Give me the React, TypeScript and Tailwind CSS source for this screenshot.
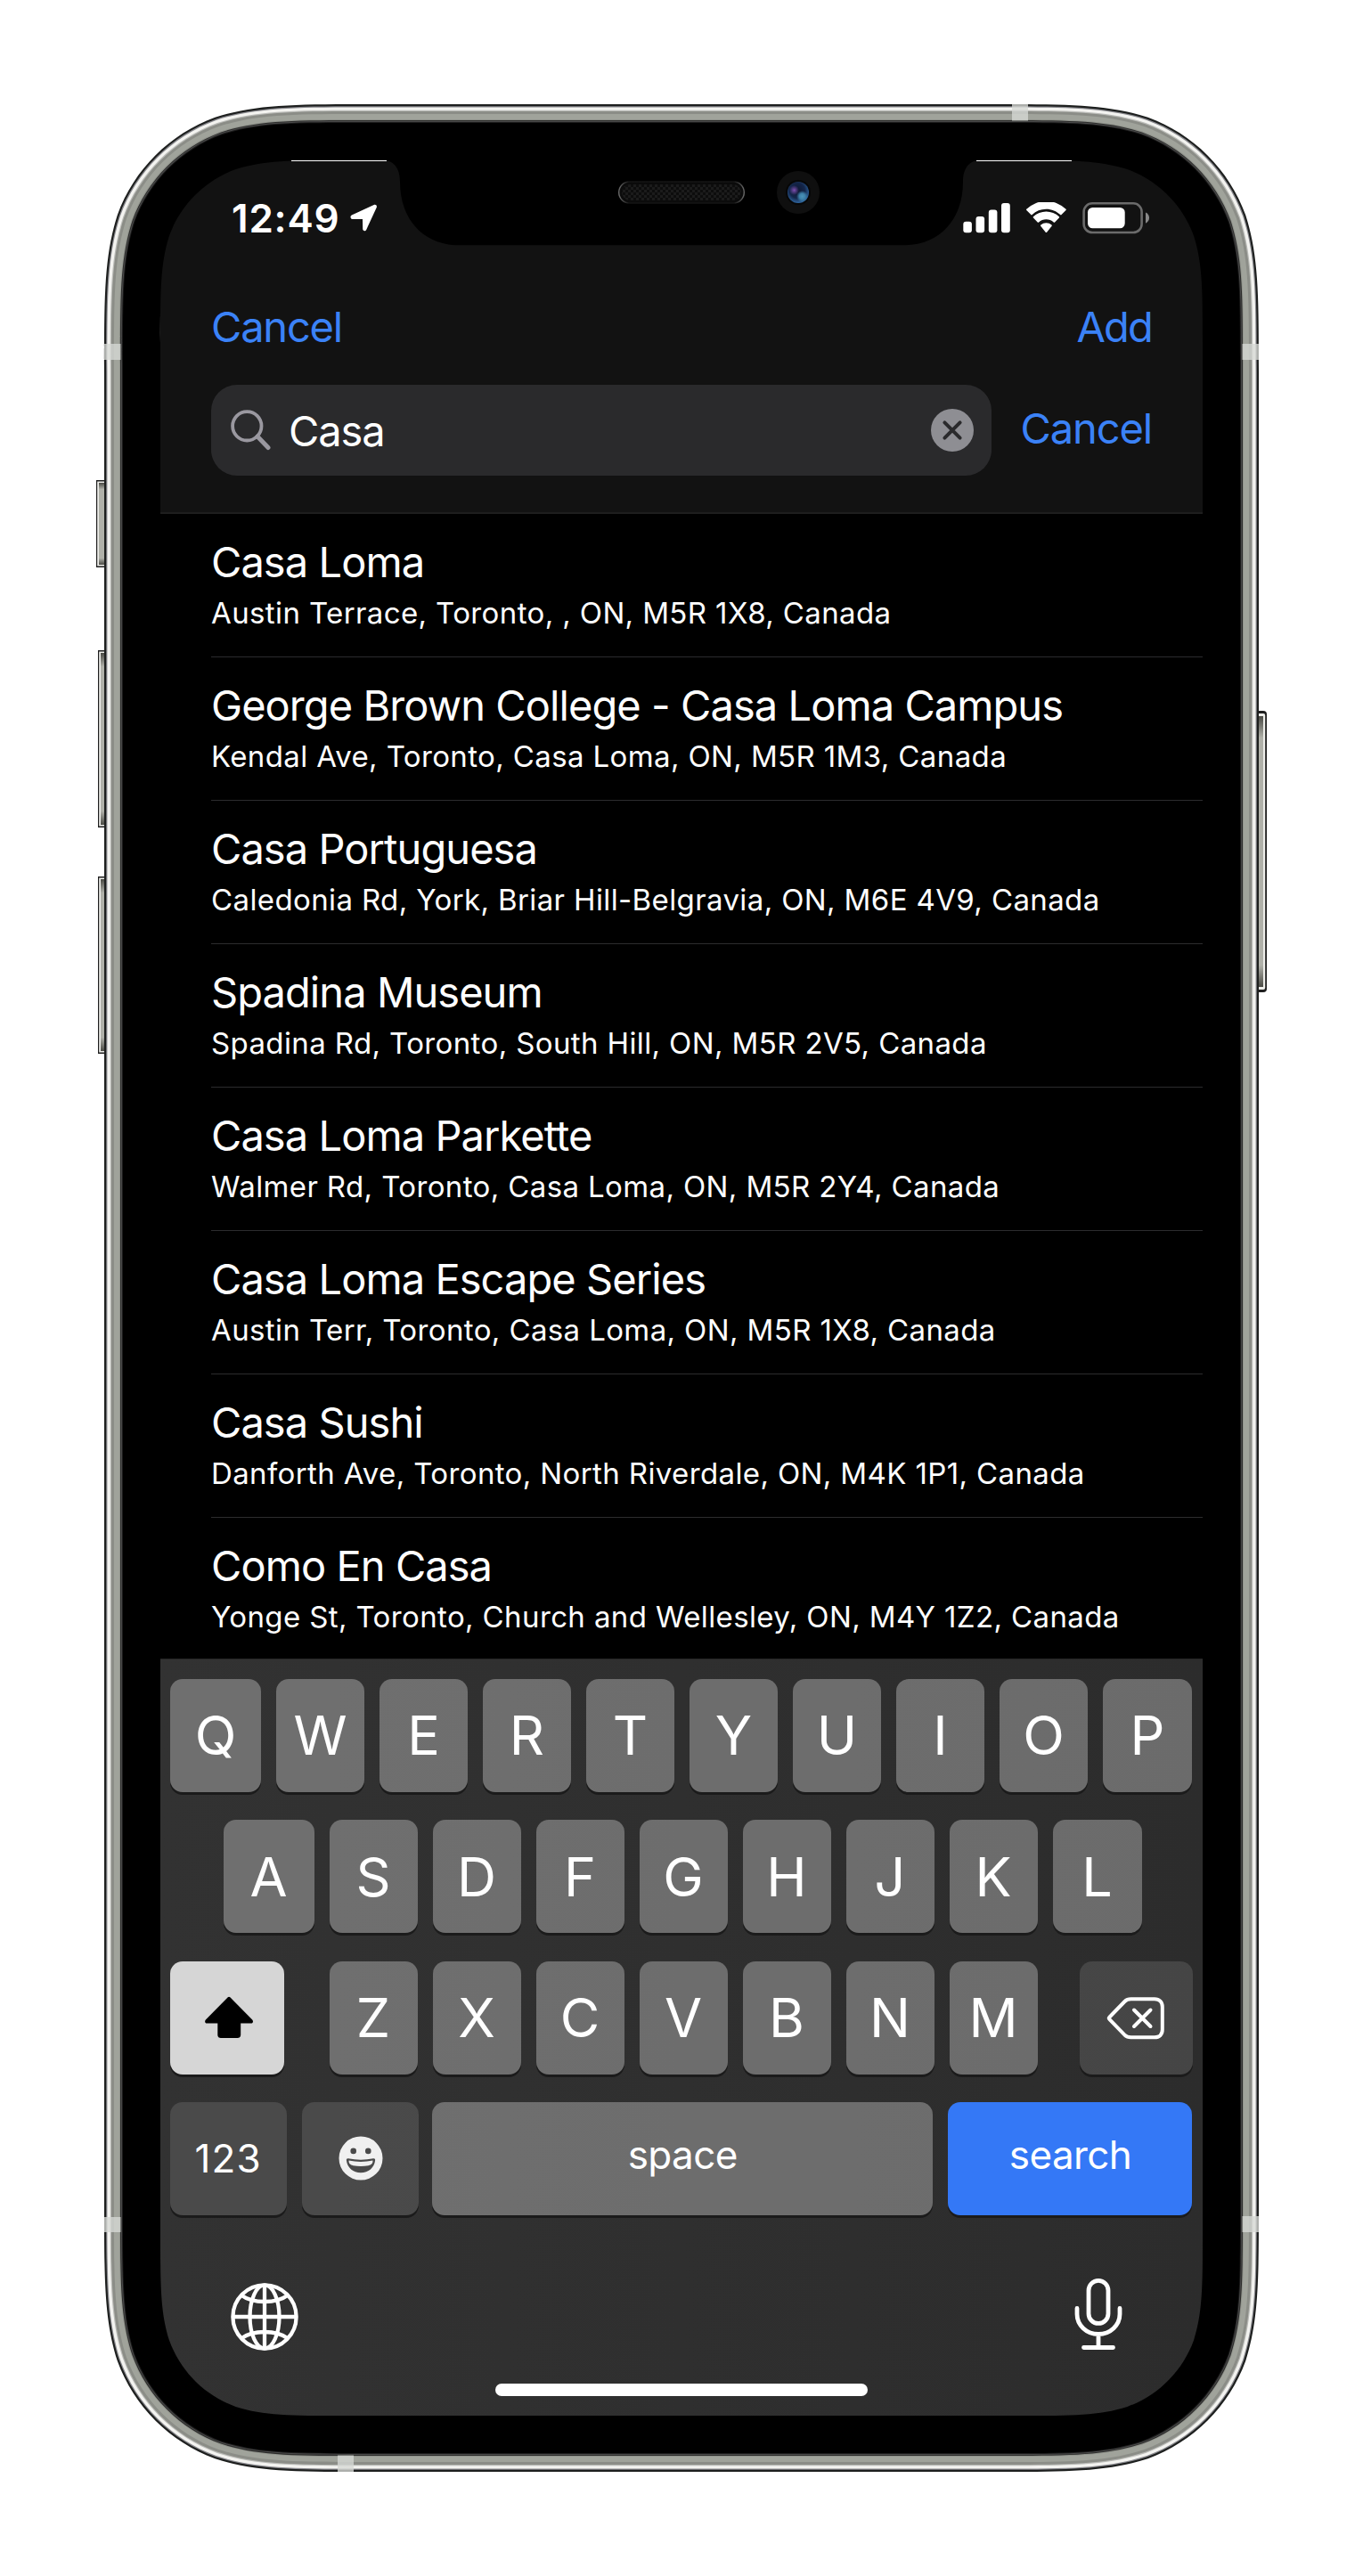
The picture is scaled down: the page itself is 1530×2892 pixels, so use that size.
import type { ReactNode } from "react";

const results = [
  ["Casa Loma", "Austin Terrace, Toronto, , ON, M5R 1X8, Canada"],
  ["George Brown College - Casa Loma Campus", "Kendal Ave, Toronto, Casa Loma, ON, M5R 1M3, Canada"],
  ["Casa Portuguesa", "Caledonia Rd, York, Briar Hill-Belgravia, ON, M6E 4V9, Canada"],
  ["Spadina Museum", "Spadina Rd, Toronto, South Hill, ON, M5R 2V5, Canada"],
  ["Casa Loma Parkette", "Walmer Rd, Toronto, Casa Loma, ON, M5R 2Y4, Canada"],
  ["Casa Loma Escape Series", "Austin Terr, Toronto, Casa Loma, ON, M5R 1X8, Canada"],
  ["Casa Sushi", "Danforth Ave, Toronto, North Riverdale, ON, M4K 1P1, Canada"],
  ["Como En Casa", "Yonge St, Toronto, Church and Wellesley, ON, M4Y 1Z2, Canada"],
];

/** Rounded rectangle with continuous-curvature corners. */
function squircle(inset: number, radius: number, box = { x: 117, y: 117, w: 1296, h: 2658 }) {
  const l = box.x + inset;
  const t = box.y + inset;
  const r = box.x + box.w - inset;
  const b = box.y + box.h - inset;
  const k = radius;
  const A = 1.52866483 * k;
  const B = 1.08849323 * k;
  const C = 0.86840689 * k;
  const D = 0.63149399 * k;
  const E = 0.07491139 * k;
  const F = 0.37282392 * k;
  const G = 0.16905899 * k;
  return [
    `M${l + A} ${t}L${r - A} ${t}`,
    `C${r - B} ${t} ${r - C} ${t} ${r - D} ${t + E}`,
    `C${r - F} ${t + G} ${r - G} ${t + F} ${r - E} ${t + D}`,
    `C${r} ${t + C} ${r} ${t + B} ${r} ${t + A}`,
    `L${r} ${b - A}`,
    `C${r} ${b - B} ${r} ${b - C} ${r - E} ${b - D}`,
    `C${r - G} ${b - F} ${r - F} ${b - G} ${r - D} ${b - E}`,
    `C${r - C} ${b} ${r - B} ${b} ${r - A} ${b}`,
    `L${l + A} ${b}`,
    `C${l + B} ${b} ${l + C} ${b} ${l + D} ${b - E}`,
    `C${l + F} ${b - G} ${l + G} ${b - F} ${l + E} ${b - D}`,
    `C${l} ${b - C} ${l} ${b - B} ${l} ${b - A}`,
    `L${l} ${t + A}`,
    `C${l} ${t + B} ${l} ${t + C} ${l + E} ${t + D}`,
    `C${l + G} ${t + F} ${l + F} ${t + G} ${l + D} ${t + E}`,
    `C${l + C} ${t} ${l + B} ${t} ${l + A} ${t}Z`,
  ].join("");
}

const screenHole = squircle(0, 134, { x: 180, y: 180, w: 1170, h: 2532 });
const ringHole = squircle(0, 150, { x: 160, y: 160, w: 1210, h: 2572 });

const rings: [number, string][] = [
  [0, "#1d1f1e"],
  [2.2, "#86868b"],
  [3.4, "#f3f3f0"],
  [6.8, "#b9bab6"],
  [8, "#8b8d87"],
  [11, "#a0a39b"],
  [17, "#8f928b"],
  [18, "#2b2b2a"],
  [19, "#4b4b4b"],
  [20, "#1b1b1b"],
  [21, "#000000"],
];

const leftButtons = [
  [108, 539, 9, 98],
  [110, 730, 7, 199],
  [110, 984, 7, 199],
];

function DeviceFrame() {
  return (
    <svg className="pointer-events-none absolute inset-0" width="1530" height="2892" viewBox="0 0 1530 2892" fill="none">
      <defs>
        <linearGradient id="btnV" x1="0" y1="0" x2="0" y2="1">
          <stop offset="0" stopColor="#4a4a44" />
          <stop offset="0.08" stopColor="#b0b1a9" />
          <stop offset="0.92" stopColor="#b0b1a9" />
          <stop offset="1" stopColor="#4a4a44" />
        </linearGradient>
        <pattern id="mesh" width="6" height="6" patternUnits="userSpaceOnUse">
          <rect width="6" height="6" fill="#0d0d0d" />
          <rect width="3" height="3" fill="#1b1b1b" />
          <rect x="3" y="3" width="3" height="3" fill="#1b1b1b" />
        </pattern>
        <linearGradient id="rim" x1="0" y1="0" x2="1" y2="0">
          <stop offset="0" stopColor="#6a6a6a" />
          <stop offset="0.08" stopColor="#141414" />
          <stop offset="0.92" stopColor="#141414" />
          <stop offset="1" stopColor="#6a6a6a" />
        </linearGradient>
        <radialGradient id="lens" cx="0.45" cy="0.4" r="0.6">
          <stop offset="0" stopColor="#0e1630" />
          <stop offset="0.6" stopColor="#14264a" />
          <stop offset="1" stopColor="#2f66a0" />
        </radialGradient>
        <radialGradient id="violet">
          <stop offset="0" stopColor="#7d4fb0" />
          <stop offset="1" stopColor="#7d4fb0" stopOpacity="0" />
        </radialGradient>
        <radialGradient id="cyan">
          <stop offset="0" stopColor="#4a93b8" />
          <stop offset="0.5" stopColor="#3d80a8" />
          <stop offset="1" stopColor="#3d80a8" stopOpacity="0" />
        </radialGradient>
      </defs>

      {leftButtons.map(([x, y, w, h]) => (
        <g key={y}>
          <path d={`M${x + w + 1} ${y}H${x}V${y + h}H${x + w + 1}Z`} fill="#1f1f1f" />
          <path d={`M${x + w} ${y + 1.5}H${x + 1.2}V${y + h - 1.5}H${x + w}Z`} fill="#eeeeea" />
          <path d={`M${x + w} ${y + 3}H${x + 3}V${y + h - 3}H${x + w}Z`} fill="url(#btnV)" />
        </g>
      ))}
      <rect x="1405" y="798" width="17" height="316" rx="4" fill="#1f1f1f" />
      <rect x="1405" y="801" width="15.2" height="310" rx="2" fill="#eeeeea" />
      <rect x="1405" y="804" width="13" height="304" fill="url(#btnV)" />

      {rings.map(([inset, color], i) => (
        <path
          key={inset}
          fillRule="evenodd"
          d={squircle(inset, 197 - inset) + (i === rings.length - 1 ? screenHole : ringHole)}
          fill={color}
        />
      ))}

      <g fill="#d6d8d5" fillOpacity="0.78">
        <rect x="117" y="386" width="18.5" height="18" />
        <rect x="1394.5" y="386" width="18.5" height="18" />
        <rect x="117" y="2489" width="18.5" height="17" />
        <rect x="1394.5" y="2488" width="18.5" height="18" />
        <rect x="1136" y="117" width="18" height="18.5" />
        <rect x="379" y="2756.5" width="18" height="18.5" />
      </g>

      <path
        d="M430 179V180C443 180 449 190 449 204C449 247 476 275.3 515 275.3H1015C1054 275.3 1081 247 1081 204C1081 190 1087 180 1100 180V179Z"
        fill="#000"
      />
      <path d="M327 180.5H434M1096 180.5H1203" stroke="#fff" />

      <rect x="694.7" y="204" width="140.6" height="24" rx="12" fill="#0b0b0b" stroke="url(#rim)" strokeWidth="1.4" />
      <rect x="698" y="207" width="134" height="18" rx="9" fill="url(#mesh)" />
      <circle cx="896" cy="216" r="24" fill="#0f0f0f" />
      <circle cx="896" cy="216" r="14" fill="#070707" />
      <circle cx="896" cy="216" r="12" fill="url(#lens)" />
      <circle cx="891.5" cy="213.5" r="5.5" fill="url(#violet)" />
      <circle cx="900.5" cy="220.5" r="6.5" fill="url(#cyan)" />
    </svg>
  );
}

function StatusIcons() {
  return (
    <svg width="210" height="36" viewBox="1081 227 210 36" fill="none">
      <g fill="#fff">
        <rect x="1081.3" y="248.8" width="9.6" height="12.4" rx="3" />
        <rect x="1095.5" y="243" width="9.6" height="18.2" rx="3" />
        <rect x="1109.8" y="235.6" width="9.6" height="25.6" rx="3" />
        <rect x="1124" y="228" width="9.8" height="33.2" rx="3" />
        <path d="M1174.4 234.8c6 0 11.6 2.3 15.8 6.3c.4.4 1 .4 1.3 0l5-5c.4-.4.4-1 0-1.4a32 32 0 0 0-44.2 0c-.4.4-.4 1 0 1.4l5 5c.4.4 1 .4 1.3 0a22.7 22.7 0 0 1 15.8-6.3z" />
        <path d="M1174.4 246.2c3.1 0 6 1.2 8.3 3.2c.4.4 1 .4 1.4 0l4.8-4.8c.4-.4.4-1 0-1.4a21 21 0 0 0-29 0c-.4.4-.4 1 0 1.4l4.8 4.8c.4.4 1 .4 1.4 0a12.4 12.4 0 0 1 8.3-3.2z" />
        <path d="M1180.500 253.900c.4-.4.4-1 0-1.400a9.500 9.500 0 0 0-12.200 0c-.4.4-.4 1 0 1.400l5.400 6.800c.4.500 1 .5 1.400 0z" />
        <rect x="1221" y="233" width="41.7" height="23.3" rx="5.5" />
        <path d="M1286 238.5c2.6 1.2 4 3.4 4 6.1s-1.4 4.9-4 6.1z" fillOpacity="0.5" />
      </g>
      <rect x="1216.6" y="228.3" width="65" height="32.7" rx="9.5" stroke="#6b6b6b" strokeWidth="2.6" />
    </svg>
  );
}

function Key({ children, className }: { children: ReactNode; className: string }) {
  return (
    <div className={`flex h-[127px] items-center justify-center rounded-[14px] text-white shadow-[0_3px_0_#1b1b1b] ${className}`}>
      {children}
    </div>
  );
}

function Letters({ row, wideEdges }: { row: string; wideEdges: boolean }) {
  return (
    <div className="flex gap-[17px] text-[61px]">
      {row.split("").map((c, i) => (
        <Key
          key={c}
          className={
            wideEdges && i === 0
              ? "w-[102px] bg-white/30 pt-px"
              : wideEdges && i === row.length - 1
                ? "w-[100px] bg-white/30 pt-px"
                : "w-[99px] bg-white/30 pt-px"
          }
        >
          {c}
        </Key>
      ))}
    </div>
  );
}

function Header() {
  return (
    <header className="h-[397px] border-b-2 border-[#1e1e1e] bg-[#121212] pt-[39px]">
      <div className="flex h-[52px] items-center justify-between pr-[59px] pl-[80px]">
        <div className="flex items-center gap-[11px]">
          <span className="text-[44px] leading-[52px] font-semibold tracking-[0.8px] text-white">12:49</span>
          <svg className="-mt-[2px]" width="31" height="31" viewBox="0 0 31 31">
            <path
              d="M1.8 12.6L26.7 1c2-.9 3.9.9 3 3L18.2 28.9c-.9 2-4 1.6-4-.9L14 17H2.9C.3 17-.4 13.7 1.8 12.6Z"
              fill="#fff"
            />
          </svg>
        </div>
        <StatusIcons />
      </div>
      <nav className="mt-[68px] flex justify-between px-[57px] text-[47px] leading-[56px] text-[#3b82f7]">
        <span className="tracking-[-1.2px]">Cancel</span>
        <span className="tracking-[-1.8px]">Add</span>
      </nav>
      <div className="mt-[37px] flex h-[102px] items-center justify-between px-[57px]">
        <div className="flex h-full w-[876px] items-center rounded-[29px] bg-[#2a2a2c] pr-[20px] pl-[22px]">
          <svg width="46" height="46" viewBox="0 0 46 46" fill="none" stroke="#9a98a0">
            <circle cx="18.3" cy="18.3" r="16.2" strokeWidth="3.8" />
            <path d="M30 30L42 42.5" strokeWidth="5" strokeLinecap="round" />
          </svg>
          <span className="flex-1 pt-[2px] pl-[19px] text-[47px] leading-[56px] tracking-[-1.1px] text-white">Casa</span>
          <svg width="48" height="48" viewBox="0 0 48 48" fill="none">
            <circle cx="24" cy="24" r="24" fill="#8e8e93" />
            <path d="M15.4 15.4L32.6 32.6M32.6 15.4L15.4 32.6" stroke="#2a2a2c" strokeWidth="4" strokeLinecap="round" />
          </svg>
        </div>
        <span className="pb-1 text-[47px] leading-[56px] tracking-[-1.1px] text-[#3b82f7]">Cancel</span>
      </div>
    </header>
  );
}

function Keyboard() {
  return (
    <section className="flex h-[850px] flex-col border-t border-[#262626] bg-linear-to-r from-[#323232] to-[#2c2c2c] pt-[22px]">
      <div className="flex flex-col gap-[31.3px]">
        <div className="pl-[11px]">
          <Letters row="QWERTYUIOP" wideEdges />
        </div>
        <div className="pl-[70.5px]">
          <Letters row="ASDFGHJKL" wideEdges />
        </div>
        <div className="flex pl-[11px]">
          <Key className="mr-[51px] w-[127.5px] bg-[#d6d6d6]">
            <svg className="ml-1" width="54" height="48" viewBox="0 0 54 48">
              <path
                d="M25.8 1.3c.8-.8 1.7-.8 2.5 0L53.2 26.5c1.5 1.6.8 4-1.4 4H40.2V43.5c0 2.2-1.3 3.5-3.5 3.5H17.8c-2.2 0-3.5-1.3-3.5-3.5V30.5H2.3C.1 30.5-.6 28.1.9 26.500Z"
                fill="#000"
              />
            </svg>
          </Key>
          <Letters row="ZXCVBNM" wideEdges={false} />
          <Key className="ml-[47px] w-[127px] bg-white/12">
            <svg className="mt-[2px]" width="66" height="50" viewBox="0 0 66 50" fill="none" stroke="#fff" strokeWidth="4" strokeLinecap="round" strokeLinejoin="round">
              <path d="M3.5 23.5L20.5 6c2-2.1 4-2.7 7-2.7H54c5.5 0 8.8 3.3 8.8 8.800V37.5c0 5.5-3.3 8.8-8.8 8.8H27.5c-3 0-5-.6-7-2.700L3.5 26.200c-.9-.9-.9-1.8 0-2.700Z" />
              <path d="M31 15.500L49.500 34M49.500 15.500L31 34" />
            </svg>
          </Key>
        </div>
        <div className="flex text-[44px]">
          <Key className="ml-[11px] w-[130.5px] bg-white/12 tracking-[1.2px]">123</Key>
          <Key className="ml-[17.7px] w-[130.8px] bg-white/12">
            <svg width="50" height="50" viewBox="0 0 50 50">
              <path
                fill="#f0f0f0"
                fillRule="evenodd"
                d="M25 .5a24.5 24.5 0 1 1 0 49a24.5 24.5 0 1 1 0-49ZM16.7 13.6a3.3 3.3 0 1 0 0 6.6a3.3 3.3 0 1 0 0-6.6ZM33.3 13.6a3.3 3.3 0 1 0 0 6.6a3.3 3.3 0 1 0 0-6.6ZM11 25.3c-1.5-.3-2.3.5-2.1 1.9C9.7 35.5 16.5 41.3 25 41.3S40.3 35.5 41.1 27.2c.2-1.4-.6-2.2-2.1-1.9C30 27.2 20 27.2 11 25.3Z"
              />
              <path fill="#f0f0f0" d="M11.6 27.6c8.5 1.7 18.3 1.7 26.8 0c.4 3-1.4 5-4.9 5.6c-5.5.9-11.5.9-17 0c-3.5-.6-5.3-2.6-4.9-5.6Z" />
            </svg>
          </Key>
          <Key className="ml-[15px] w-[562.5px] bg-white/30 pb-[9px] tracking-[-0.6px]">space</Key>
          <Key className="ml-[17px] w-[274px] bg-[#3478f6] pb-[9px] tracking-[-0.6px]">search</Key>
        </div>
      </div>
      <div className="mt-[69px] flex items-center justify-between pr-[89px] pl-[78px]">
        <svg className="mt-[6px]" width="78" height="78" viewBox="-39 -39 78 78" fill="none" stroke="#fff" strokeWidth="4.3">
          <circle r="35.6" />
          <ellipse rx="16.5" ry="35.6" />
          <path d="M0-36V36M-36 0H36" />
          <path d="M-26.5-24.5C-13-14.5 13-14.5 26.5-24.5M-26.5 24.5C-13 14.5 13 14.5 26.5 24.5" />
        </svg>
        <svg width="56" height="82" viewBox="0 0 56 82" fill="none" stroke="#fff" strokeWidth="4.8" strokeLinecap="round">
          <rect x="17" y="3.4" width="22" height="48" rx="11" />
          <path d="M4 34.5V41a24 22.5 0 0 0 48 0V34.5M28 64V78M11.5 78.5H44.5" />
        </svg>
      </div>
      <div className="mx-auto mt-[36px] h-[14.5px] w-[418px] rounded-full bg-white" />
    </section>
  );
}

export default function App() {
  return (
    <div className="relative h-[2892px] w-[1530px] overflow-hidden bg-white px-[180px] pt-[180px] font-['Inter','Liberation_Sans',sans-serif]">
      <main className="flex h-[2532px] w-[1170px] flex-col overflow-hidden rounded-[70px] bg-black">
        <Header />
        <ul className="flex h-[1285px] flex-col pl-[57px] text-white">
          {results.map(([name, address], i) => (
            <li
              key={name}
              className={
                i < results.length - 1
                  ? "h-[161px] border-b border-[#2c2c2e] pt-[26px] whitespace-nowrap"
                  : "h-[158px] pt-[26px] whitespace-nowrap"
              }
            >
              <div className="text-[47px] leading-[56px] tracking-[-0.93px]">{name}</div>
              <div className="mt-[9px] text-[33px] leading-[40px] tracking-[0.38px]">{address}</div>
            </li>
          ))}
        </ul>
        <Keyboard />
      </main>
      <DeviceFrame />
    </div>
  );
}
